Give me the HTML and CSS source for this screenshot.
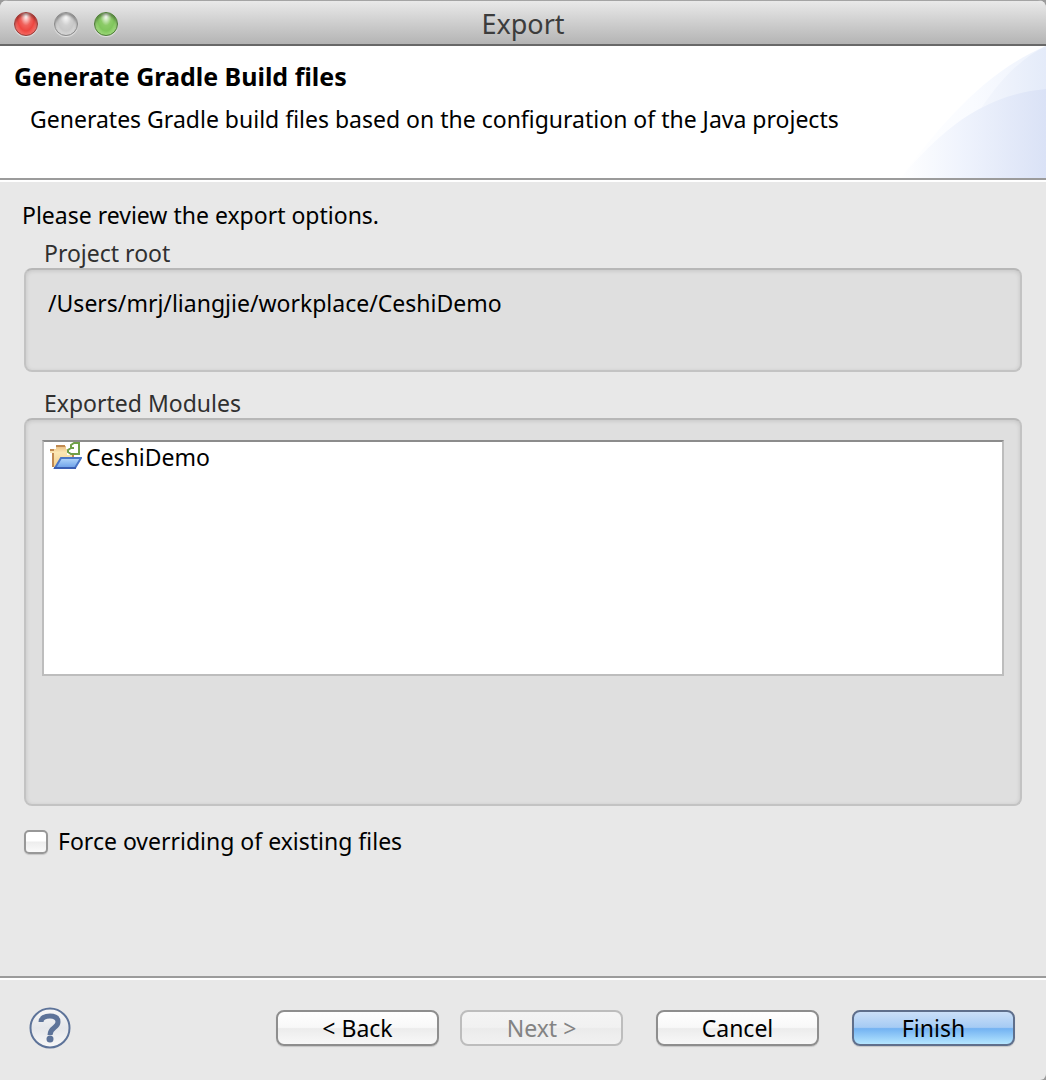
FILE: index.html
```html
<!DOCTYPE html>
<html lang="en">
<head>
<meta charset="utf-8">
<meta name="viewport" content="width=device-width, initial-scale=1">
<title>Export</title>
<link rel="stylesheet" href="styles.css">
</head>
<body>
<form class="dialog">
  <header class="titlebar">
    <div class="lights">
      <button type="button" class="light light-close" aria-label="Close"></button>
      <button type="button" class="light light-minimize" aria-label="Minimize" disabled></button>
      <button type="button" class="light light-zoom" aria-label="Zoom"></button>
    </div>
    <h1 class="window-title">Export</h1>
  </header>

  <section class="banner">
    <div class="banner-text">
      <h2 class="banner-title">Generate Gradle Build files</h2>
      <p class="banner-description">Generates Gradle build files based on the configuration of the Java projects</p>
    </div>
    <svg class="banner-art" viewBox="0 0 146 132" aria-hidden="true">
      <defs>
        <linearGradient id="fade-light"><stop offset="0" stop-color="#fff"/><stop offset=".5" stop-color="#f9fbff"/><stop offset="1" stop-color="#edf2fc"/></linearGradient>
        <linearGradient id="fade-mid"><stop offset="0" stop-color="#fbfcff"/><stop offset="1" stop-color="#e4ebf9"/></linearGradient>
        <linearGradient id="fade-deep"><stop offset="0" stop-color="#fff"/><stop offset=".4" stop-color="#f0f4fd"/><stop offset="1" stop-color="#dae2f6"/></linearGradient>
      </defs>
      <path fill="url(#fade-light)" d="M0 132C40 80 84 26 146 0V132Z"/>
      <path fill="url(#fade-mid)" d="M50 132C62 84 100 22 146 0V132Z"/>
      <path fill="url(#fade-deep)" d="M0 132C30 100 70 50 146 43V132Z"/>
    </svg>
  </section>

  <main class="content">
    <p class="intro">Please review the export options.</p>

    <fieldset class="group">
      <legend class="group-label">Project root</legend>
      <div class="group-box root-box">/Users/mrj/liangjie/workplace/CeshiDemo</div>
    </fieldset>

    <fieldset class="group">
      <legend class="group-label">Exported Modules</legend>
      <div class="group-box modules-box">
        <ul class="modules">
          <li class="module">
            <svg class="module-icon" viewBox="0 0 32 32" aria-hidden="true">
              <defs>
                <linearGradient id="folder-back" x2="0" y2="1"><stop offset="0" stop-color="#e9bd80"/><stop offset=".3" stop-color="#fbe7b4"/><stop offset="1" stop-color="#f3cf8c"/></linearGradient>
                <linearGradient id="folder-front" x2="0" y2="1"><stop offset="0" stop-color="#b4d8fb"/><stop offset="1" stop-color="#6a9fe8"/></linearGradient>
              </defs>
              <path fill="url(#folder-back)" d="M4 8h2V5h10v3h8v12H8v6H3V12H0V8z"/>
              <path fill="#c08a52" d="M0 8h4v2H0zM6 4h9v2H6zM2 12h2v14H2zM22 14h2v4h-2z"/>
              <path fill="#fff" d="M17 1h14v13H17z"/>
              <path fill="none" stroke="#6f9f48" stroke-width="2" d="M29 1v13M30 2h-6l-3 2v3h3M28 13h-7l-3-2V9l3-2"/>
              <path fill="url(#folder-front)" stroke="#4a76c6" stroke-width="2" d="M11 17h20l-6 10H5z"/>
              <path fill="#3a5fb4" d="M4 26h22v2H4z"/>
            </svg>
            <span>CeshiDemo</span>
          </li>
        </ul>
      </div>
    </fieldset>

    <label class="option">
      <input type="checkbox" class="checkbox">
      <span>Force overriding of existing files</span>
    </label>
  </main>

  <footer class="footer">
    <button type="button" class="help" aria-label="Help">
      <svg viewBox="0 0 42 42" aria-hidden="true">
        <defs><linearGradient id="help-fill" x2="0" y2="1"><stop offset="0" stop-color="#f8f8f8"/><stop offset=".5" stop-color="#e4e6ea"/><stop offset="1" stop-color="#f8f8f8"/></linearGradient></defs>
        <circle cx="21" cy="21" r="19.500" fill="url(#help-fill)" stroke="#5d7399" stroke-width="2"/>
        <path fill="none" stroke="#5d7399" stroke-width="5" d="M12 15c0-4 4-6 9-6 5 0 8 2 8 6 0 6-8 5-8 13"/>
        <circle cx="21" cy="32" r="3.500" fill="#5d7399"/>
      </svg>
    </button>
    <div class="actions">
      <div class="nav">
        <button type="button" class="button">&lt; Back</button>
        <button type="button" class="button" disabled>Next &gt;</button>
      </div>
      <button type="button" class="button">Cancel</button>
      <button type="submit" class="button button-default">Finish</button>
    </div>
  </footer>
</form>
</body>
</html>
```
FILE: styles.css
```css
* {
  box-sizing: border-box;
}

body {
  margin: 0;
  background: #9a9a9a;
  color: #000;
  font: 23px/26px "Lucida Grande", "Noto Sans", sans-serif;
}

h1, h2, p, ul {
  margin: 0;
  padding: 0;
}

.dialog {
  display: flex;
  flex-direction: column;
  min-height: 100vh;
  overflow: hidden;
  border-radius: 8px 8px 6px 0;
  background: #e8e8e8;
}

/* Title bar */
.titlebar {
  display: grid;
  grid-template-columns: 1fr auto 1fr;
  align-items: center;
  height: 46px;
  padding: 2px 14px 0;
  border-top: 1px solid #a4a4a4;
  border-bottom: 2px solid #686868;
  background: linear-gradient(#e9e9e9, #b4b4b4);
}

.lights {
  display: flex;
  gap: 16px;
}

.light {
  width: 24px;
  height: 24px;
  padding: 0;
  border: 1px solid #8a8a8a;
  border-radius: 50%;
  box-shadow: inset 0 2px 3px rgba(0, 0, 0, 0.4), 0 1px 1px rgba(255, 255, 255, 0.6);
}

.light-close {
  border-color: #9b3a37;
  background: radial-gradient(ellipse at 50% 15%, #fff 0, #f0625c 35%, #ee4640 55%, #ffa69e 100%);
}

.light-minimize {
  background: radial-gradient(ellipse at 50% 15%, #fff 0, #d0d0d0 35%, #c8c8c8 55%, #f0f0f0 100%);
}

.light-zoom {
  border-color: #4c7d35;
  background: radial-gradient(ellipse at 50% 15%, #fff 0, #8ccb68 35%, #80c65c 55%, #ccf8a8 100%);
}

.window-title {
  color: #3c3c3c;
  font-size: 27px;
  font-weight: 400;
}

/* Banner */
.banner {
  display: flex;
  justify-content: space-between;
  border-bottom: 2px solid #9b9b9b;
  background: #fff;
}

.banner-text {
  padding: 17px 0 0 14px;
}

.banner-title {
  font-size: 25px;
  font-weight: 700;
}

.banner-description {
  padding: 17px 0 0 16px;
}

.banner-art {
  flex: none;
  width: 146px;
  height: 132px;
}

/* Options */
.content {
  flex: 1;
  padding: 20px 24px 0;
  border-top: 2px solid #fff;
}

.intro {
  margin-left: -2px;
}

.group {
  min-width: 0;
  margin: 12px 0 18px;
  padding: 0;
  border: 0;
}

.group-label {
  padding: 0 20px 2px;
  color: #303030;
}

.group-box {
  border: 2px solid #c3c3c3;
  border-top-color: #b7b7b7;
  border-radius: 8px;
  background: #dfdfdf;
  box-shadow: inset 0 1px 4px rgba(0, 0, 0, 0.12);
}

.root-box {
  min-height: 104px;
  padding: 20px 22px;
}

.modules-box {
  min-height: 388px;
  padding: 20px 16px;
}

.modules {
  min-height: 236px;
  border: 2px solid #bdbdbd;
  border-top-color: #8c8c8c;
  background: #fff;
  list-style: none;
}

.module {
  display: flex;
  gap: 4px;
  align-items: center;
  height: 30px;
  padding-left: 6px;
}

.module-icon {
  width: 32px;
  height: 32px;
}

.option {
  display: flex;
  gap: 10px;
  align-items: flex-end;
  margin-top: 22px;
}

.checkbox {
  width: 24px;
  height: 24px;
  margin: 0;
  appearance: none;
  border: 2px solid #989898;
  border-radius: 5px;
  background: linear-gradient(#fff 45%, #ededed 50%, #fafafa);
  box-shadow: 0 1px 1px rgba(0, 0, 0, 0.15);
}

.checkbox:checked {
  background: #4a90e2;
}

/* Footer */
.footer {
  display: flex;
  justify-content: space-between;
  align-items: center;
  height: 104px;
  padding: 0 31px 3px 29px;
  border-top: 2px solid #9b9b9b;
  box-shadow: inset 0 2px #fff;
}

.help {
  width: 42px;
  height: 42px;
  padding: 0;
  border: 0;
  background: none;
}

.help svg {
  display: block;
}

.actions {
  display: flex;
  gap: 33px;
}

.nav {
  display: flex;
  gap: 21px;
}

.button {
  width: 163px;
  height: 36px;
  padding: 0;
  border: 2px solid #8e8e8e;
  border-radius: 8px;
  background: linear-gradient(#fff, #f8f8f8 48%, #ececec 52%, #f8f8f8);
  box-shadow: 0 1px 1px rgba(0, 0, 0, 0.15);
  color: #000;
  font: inherit;
}

.button:disabled {
  border-color: #bdbdbd;
  background: linear-gradient(#f4f4f4, #f1f1f1 48%, #ebebeb 52%, #f1f1f1);
  box-shadow: none;
  color: #838383;
}

.button-default {
  border-color: #5f6f8c;
  background: linear-gradient(#cbdff8, #a5cbf4 48%, #73b2f2 52%, #b5e6ff);
}
```
